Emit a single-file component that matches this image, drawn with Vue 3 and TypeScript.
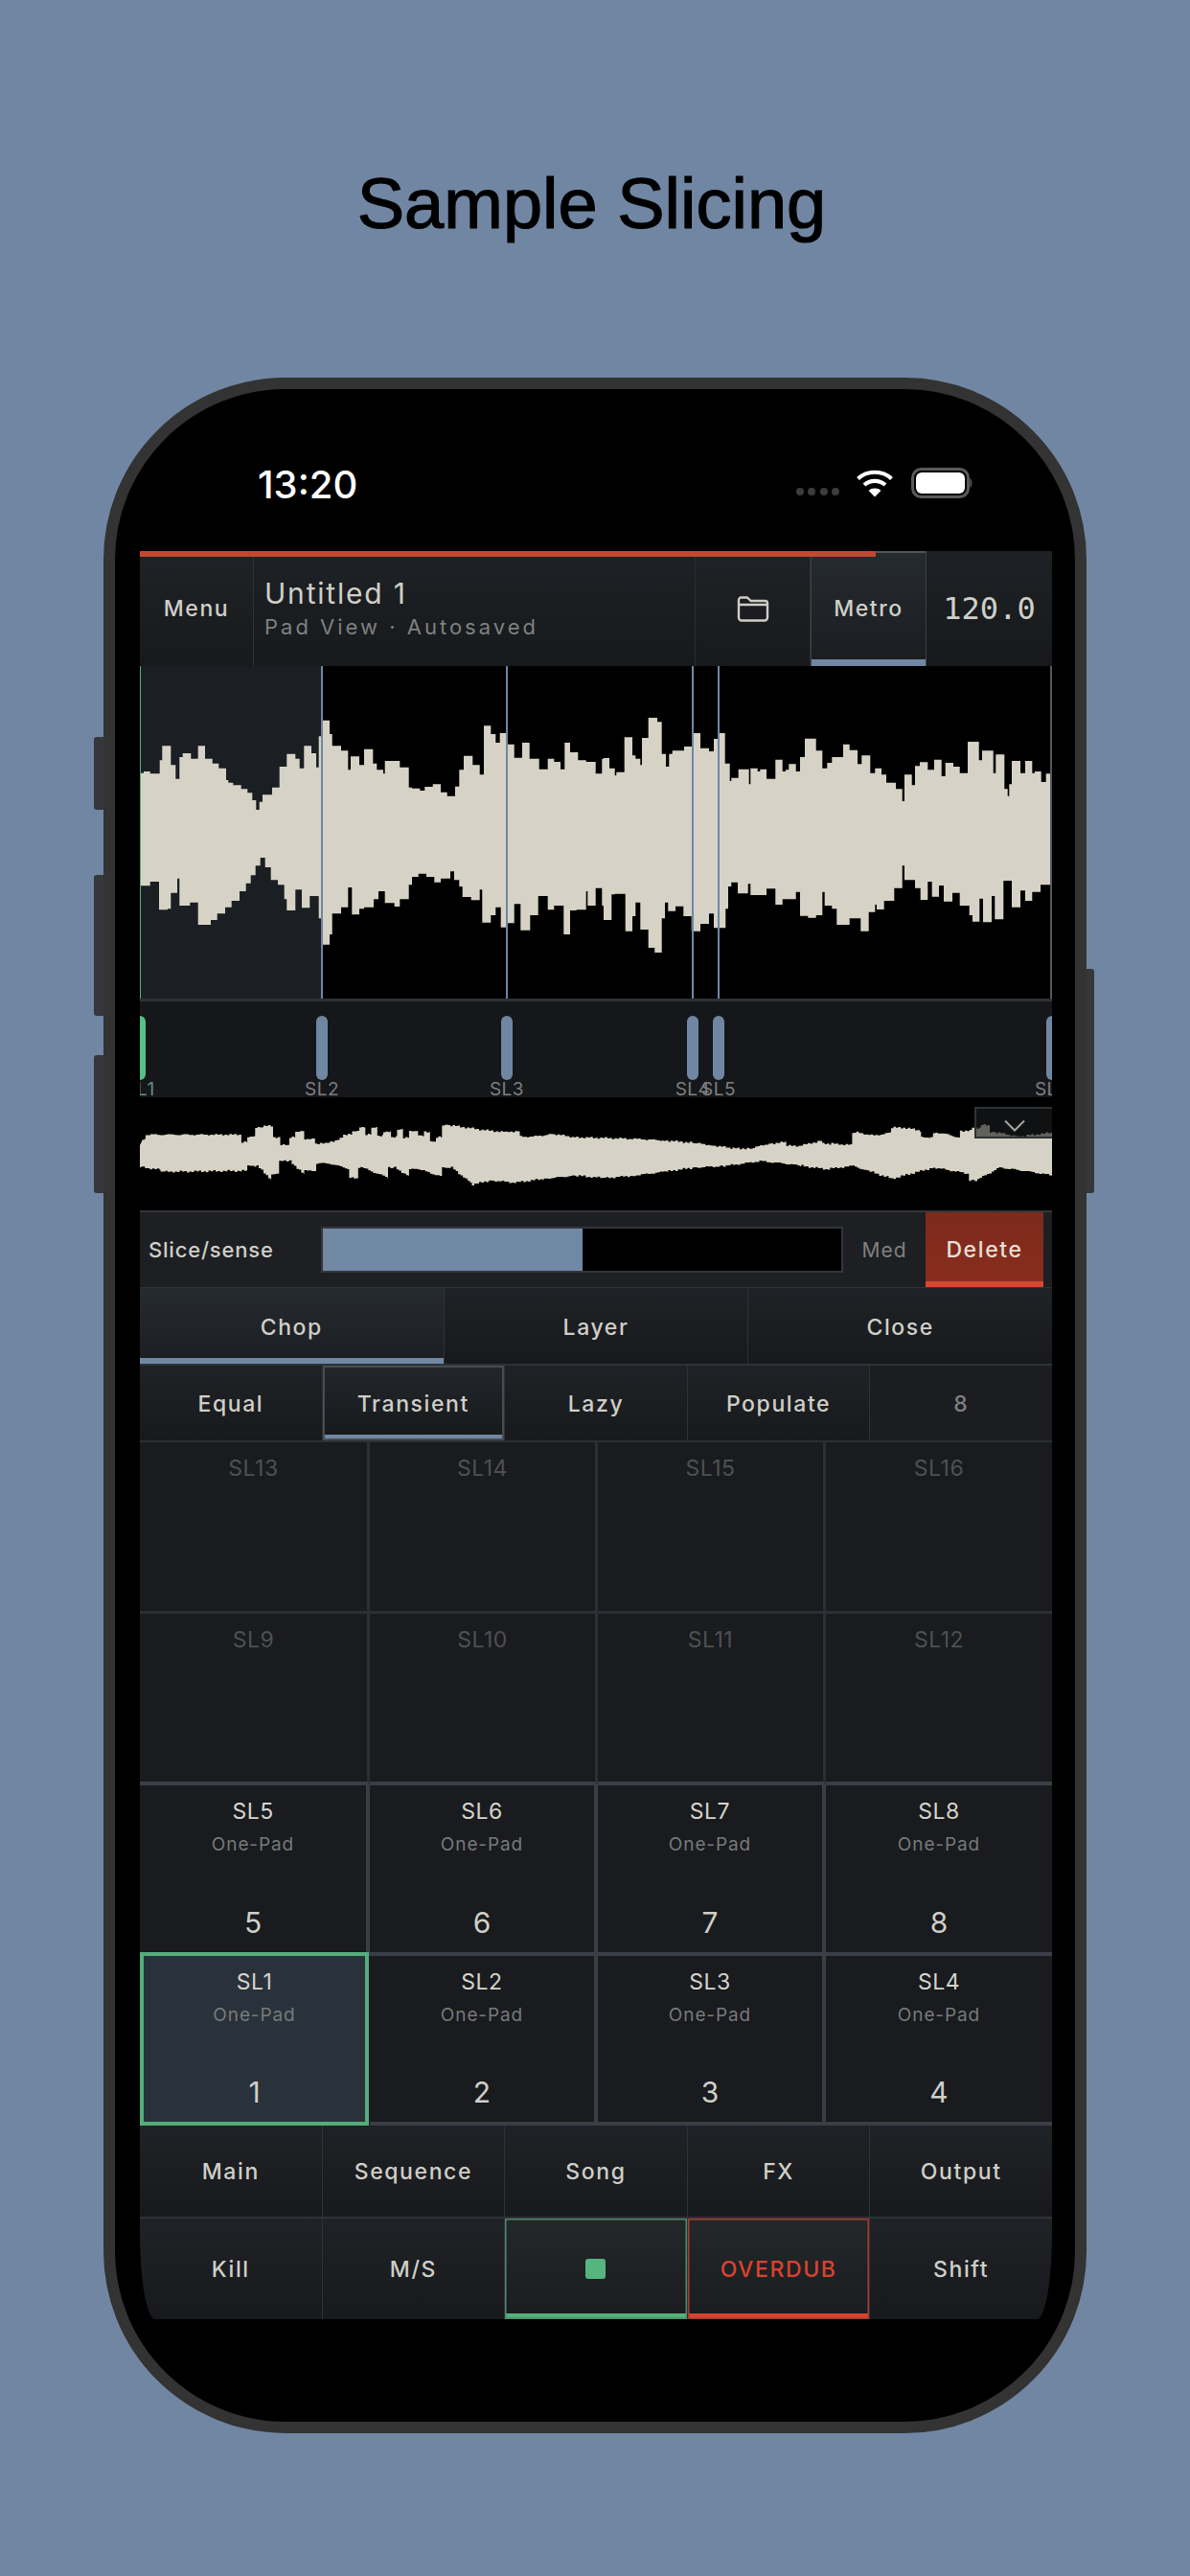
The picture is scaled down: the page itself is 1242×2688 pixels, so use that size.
<script setup lang="ts">
// envelope data is [endX, y] pairs read off the reference, in its own crop coordinates
const waveTopA = [60,350,80,345,110,352,118,310,145,265,160,325,172,368,182,300,208,288,230,305,252,265,275,305,295,320,318,335,325,372,340,380,365,388,385,400,400,412,412,435,422,465,432,440,462,418,485,395,508,330,535,290,548,305,562,335,585,265,600,288,608,332,620,235,642,185,650,228,678,265,700,280,708,340,735,298,750,325,778,275,790,320,810,340,815,352,862,312,890,332,900,395,925,398,940,405,965,393,990,385,1010,410,1035,422,1048,392,1062,340,1090,296,1112,325,1125,355,1147,202,1162,228,1175,255,1195,225,1220,260,1245,302,1268,255,1298,305,1325,338,1345,305,1365,315,1378,338,1395,255,1420,285,1445,310,1475,315,1495,352,1500,305]
const waveTopB = [48,303,65,335,70,358,95,347,120,238,130,295,145,305,150,325,170,240,198,177,212,190,225,290,235,330,245,290,282,280,310,267,333,225,360,272,375,282,388,243,410,225,425,320,430,375,452,365,485,338,490,385,512,335,520,345,540,338,568,368,590,308,600,345,610,340,632,322,645,345,660,300,695,242,715,280,730,335,745,318,780,300,800,260,825,278,838,322,865,295,880,350,900,335,915,355,945,380,965,400,972,438,995,355,1005,388,1020,328,1045,316,1065,340,1088,308,1100,360,1125,318,1145,330,1170,350,1205,252,1215,310,1250,280,1258,350,1285,292,1295,400,1300,422,1308,385,1335,312,1350,350,1372,312,1380,350,1400,345,1415,378,1435,352]
const waveBotA = [80,703,108,690,135,778,145,775,165,725,172,680,205,765,230,755,270,825,290,810,315,790,335,770,360,750,380,720,395,695,410,670,425,640,440,615,458,645,480,685,500,700,508,745,535,780,555,715,580,772,608,735,620,805,642,887,650,855,678,790,700,770,712,708,735,793,750,775,780,770,795,745,815,720,845,757,862,768,890,745,900,700,920,675,945,665,970,675,990,692,1020,680,1032,658,1048,685,1058,705,1085,738,1112,748,1120,715,1147,818,1162,795,1178,770,1195,833,1220,820,1240,760,1270,842,1295,795,1325,735,1345,778,1375,765,1395,855,1415,780,1445,778,1450,720,1475,765,1495,710,1500,765]
const waveBotB = [55,810,65,730,98,728,120,845,130,798,145,755,170,840,190,897,212,912,222,805,232,755,255,782,280,767,305,798,333,845,360,822,375,790,412,835,420,775,430,705,450,692,482,727,490,697,540,732,568,712,590,762,632,745,645,722,670,797,695,803,715,795,722,722,745,765,760,775,800,825,835,805,860,845,880,785,885,762,908,777,940,750,965,710,972,640,1005,685,1022,710,1045,747,1058,690,1080,737,1095,702,1122,752,1145,725,1175,765,1185,795,1207,815,1218,743,1245,817,1255,735,1282,808,1308,687,1335,770,1350,718,1372,750,1398,722,1435,700]
const miniTop = [30,490,35,475,55,462,195,462,205,485,218,468,232,440,248,435,260,470,275,495,285,470,300,452,318,475,335,490,365,470,380,462,392,450,402,440,412,462,422,440,432,465,445,452,455,470,465,445,475,470,490,450,500,465,510,455,520,485,530,470,540,432,600,448,640,455,660,452,680,468,715,460,750,470,850,475,900,480,950,488,980,495,1015,505,1045,505,1075,490,1105,485,1125,497,1165,480,1180,490,1215,495,1222,455,1250,465,1280,455,1300,440,1330,450,1350,470,1365,458,1395,472,1415,450,1430,440,1445,432,1455,455,1490,468,1550,455]
const miniBot = [30,565,60,572,80,578,205,575,220,560,245,605,258,585,275,545,300,590,320,575,340,552,375,570,390,598,395,565,440,598,450,565,475,595,490,570,530,595,545,565,580,618,610,605,650,612,700,600,750,590,800,598,850,590,900,578,950,565,1000,560,1060,545,1100,552,1130,560,1170,570,1215,560,1240,575,1280,600,1320,580,1350,565,1410,585,1420,605,1460,565,1500,575,1550,590]

function steps(data: number[], startX: number, x0: number, xs: number, y0: number, ys: number): string[] {
  const pts: string[] = []
  let x = startX
  for (let i = 0; i < data.length; i += 2) {
    const nx = x0 + data[i] / xs
    const y = y0 + data[i + 1] / ys
    pts.push(`${x.toFixed(1)},${y.toFixed(1)}`, `${nx.toFixed(1)},${y.toFixed(1)}`)
    x = nx
  }
  return pts
}

// the overview is drawn finer than the main view: short columns, slopes only over long runs
function rough(data: number[], x0: number, xs: number, y0: number, ys: number, dir: number): string[] {
  const pts: string[] = []
  let px = x0 + data[0] / xs
  let py = y0 + data[1] / ys
  for (let i = 2; i < data.length; i += 2) {
    const nx = x0 + data[i] / xs
    const ny = y0 + data[i + 1] / ys
    for (let x = px; x < nx; x += 2.5) {
      const t = nx - px < 14 ? 1 : (x - px) / (nx - px)
      const y = py + (ny - py) * t + dir * Math.sin(x * 1.7) * Math.sin(x * 0.43) * 1.1
      const xEnd = Math.min(x + 2.5, nx)
      pts.push(`${x.toFixed(1)},${y.toFixed(1)}`, `${xEnd.toFixed(1)},${y.toFixed(1)}`)
    }
    px = nx
    py = ny
  }
  return pts
}

const wavePoints = [
  ...steps(waveTopA, 146, 130, 3, 690, 3),
  ...steps(waveTopB, 630, 620, 3, 690, 3),
  ...[...steps(waveBotA, 146, 130, 3, 690, 3), ...steps(waveBotB, 630, 620, 3, 690, 3)].reverse(),
].join(' ')

const miniPoints = [
  '146,1195',
  ...rough(miniTop, 130, 1.6, 1030, 3, 1),
  ...rough(miniBot, 130, 1.6, 1030, 3, -1).reverse(),
  '146,1218',
].join(' ')

const slices = [
  { name: 'SL1', x: 0 },
  { name: 'SL2', x: 190 },
  { name: 'SL3', x: 383 },
  { name: 'SL4', x: 577 },
  { name: 'SL5', x: 604 },
  { name: 'SL6', x: 952 },
]

const modes = ['Chop', 'Layer', 'Close']
const subModes = ['Equal', 'Transient', 'Lazy', 'Populate', '8']

const pads = [13, 14, 15, 16, 9, 10, 11, 12, 5, 6, 7, 8, 1, 2, 3, 4].map((n) => ({
  n,
  used: n <= 8,
}))

const navRow = ['Main', 'Sequence', 'Song', 'FX', 'Output']
</script>

<template>
  <div class="page">
    <h1 class="title">Sample Slicing</h1>

    <div class="phone">
      <span class="side side-l1"></span>
      <span class="side side-l2"></span>
      <span class="side side-l3"></span>
      <span class="side side-r"></span>

      <div class="status">
        <span class="time">13:20</span>
        <div class="status-icons">
          <div class="signal"><i></i><i></i><i></i><i></i></div>
          <svg class="wifi" width="40" height="30" viewBox="0 0 40 30" fill="none" stroke="#fff" stroke-width="4.2">
            <path d="M2.5 10.5 C12 1.5 28 1.5 37.5 10.5" />
            <path d="M9 17 C15 11.5 25 11.5 31 17" />
            <path d="M20 29.5 L13.6 23 C17 19.8 23 19.8 26.4 23 Z" fill="#fff" stroke="none" />
          </svg>
          <svg class="battery" width="65" height="32" viewBox="0 0 65 32">
            <rect x="1.5" y="1.5" width="58" height="29" rx="9" fill="none" stroke="#5a5a5a" stroke-width="3" />
            <rect x="5" y="5" width="51" height="22" rx="6" fill="#fff" />
            <path d="M61.5 11 C64 12 64 20 61.5 21 Z" fill="#5a5a5a" />
          </svg>
        </div>
      </div>

      <div class="app">
        <header class="topbar">
          <div class="progress"></div>
          <div class="cell menu">Menu</div>
          <div class="doc">
            <div class="doc-name">Untitled 1</div>
            <div class="doc-sub">Pad View · Autosaved</div>
          </div>
          <div class="cell folder">
            <svg width="34" height="27" viewBox="0 0 34 27" fill="none" stroke="#cfcfc8" stroke-width="2.4" stroke-linejoin="round">
              <path d="M2 6 V4 a2.5 2.5 0 0 1 2.5-2.5 H11 l3.5 3.5 H29.5 a2.5 2.5 0 0 1 2.5 2.5 V22.5 a3 3 0 0 1-3 3 H5 a3 3 0 0 1-3-3 Z" />
              <path d="M2 9 H32" />
            </svg>
          </div>
          <div class="cell metro">Metro</div>
          <div class="bpm">120.0</div>
        </header>

        <div class="wave">
          <svg width="952" height="347" viewBox="146 695 952 347">
            <rect x="146" y="695" width="190" height="347" fill="#1b1f24" />
            <polygon :points="wavePoints" fill="#d6d3c6" />
            <rect x="145" y="695" width="2" height="347" fill="#56b07c" />
            <rect
              v-for="s in slices.slice(1, 5)"
              :key="s.name"
              :x="145 + s.x"
              y="695"
              width="2"
              height="347"
              fill="#6f87a3"
            />
            <rect x="1096" y="695" width="2" height="347" fill="#55585c" />
          </svg>
        </div>

        <div class="ruler">
          <div
            v-for="(s, i) in slices"
            :key="s.name"
            class="marker"
            :style="{ left: s.x + 'px' }"
          >
            <span class="handle" :class="{ first: i === 0 }"></span>
            <span class="handle-label" :class="{ first: i === 0 }">{{ s.name }}</span>
          </div>
        </div>

        <div class="overview">
          <svg width="952" height="118" viewBox="146 1145 952 118">
            <polygon :points="miniPoints" fill="#d6d3c6" />
          </svg>
          <div class="collapse">
            <svg width="24" height="13" viewBox="0 0 24 13" fill="none" stroke="#a5a5a5" stroke-width="2">
              <path d="M2 1.5 L12 11.5 L22 1.5" />
            </svg>
          </div>
        </div>

        <div class="sense">
          <span class="sense-label">Slice/sense</span>
          <div class="slider"><div class="slider-fill" :style="{ width: '50%' }"></div></div>
          <span class="sense-value">Med</span>
          <div class="delete">Delete</div>
        </div>

        <div class="row modes">
          <div v-for="(m, i) in modes" :key="m" class="cell" :class="{ on: i === 0 }">{{ m }}</div>
        </div>

        <div class="row subs">
          <div
            v-for="(m, i) in subModes"
            :key="m"
            class="cell"
            :class="{ picked: i === 1, plain: i === 4 }"
          >{{ m }}</div>
        </div>

        <div class="pads">
          <div
            v-for="p in pads"
            :key="p.n"
            class="pad"
            :class="{ used: p.used, active: p.n === 1 }"
          >
            <span class="pad-name">SL{{ p.n }}</span>
            <template v-if="p.used">
              <span class="pad-type">One-Pad</span>
              <span class="pad-num">{{ p.n }}</span>
            </template>
          </div>
        </div>

        <div class="row nav">
          <div v-for="b in navRow" :key="b" class="cell">{{ b }}</div>
        </div>

        <div class="row transport">
          <div class="cell">Kill</div>
          <div class="cell">M/S</div>
          <div class="cell stop"><span class="stop-icon"></span></div>
          <div class="cell overdub">OVERDUB</div>
          <div class="cell">Shift</div>
        </div>
      </div>
    </div>
  </div>
</template>

<style>
html,
body {
  margin: 0;
  background: #7086a2;
}
</style>

<style scoped>
.page {
  width: 1242px;
  height: 2688px;
  overflow: hidden;
  background: #7086a2;
}
.title {
  margin: 0;
  height: 394px;
  box-sizing: border-box;
  padding: 171px 7px 0 0;
  text-align: center;
  font: 400 74px/84px "Liberation Sans", Arial, sans-serif;
  -webkit-text-stroke: 1.2px #000;
  color: #000;
}
.phone {
  position: relative;
  box-sizing: border-box;
  width: 1026px;
  height: 2145px;
  margin-left: 108px;
  border: 12px solid #333333;
  border-radius: 190px;
  background: #000;
  font-family: Inter, "Liberation Sans", sans-serif;
  color: #cfcfc8;
  display: flex;
  flex-direction: column;
}
.side {
  position: absolute;
  width: 10px;
  background: #35373a;
}
.side-l1 { left: -22px; top: 363px; height: 76px; border-radius: 3px 0 0 3px; }
.side-l2 { left: -22px; top: 507px; height: 147px; border-radius: 3px 0 0 3px; }
.side-l3 { left: -22px; top: 695px; height: 144px; border-radius: 3px 0 0 3px; }
.side-r { right: -20px; width: 8px; top: 605px; height: 234px; border-radius: 0 3px 3px 0; }

.status {
  height: 169px;
  box-sizing: border-box;
  padding: 76px 106px 0 149px;
  display: flex;
  justify-content: space-between;
  align-items: flex-start;
}
.time {
  font-size: 40px;
  line-height: 48px;
  font-weight: 500;
  color: #fff;
}
.status-icons {
  display: flex;
  align-items: flex-start;
  margin-top: 6px;
}
.signal {
  display: flex;
  gap: 4.5px;
  margin: 21px 17px 0 0;
}
.signal i {
  width: 8px;
  height: 8px;
  border-radius: 50%;
  background: #3c3c3c;
}
.wifi {
  display: block;
  margin: 1px 18px 0 0;
}
.battery {
  display: block;
}

.app {
  margin: 0 24px 0 26px;
  height: 1845px;
  display: flex;
  flex-direction: column;
  overflow: hidden;
  border-radius: 0 0 16px 16px / 0 0 90px 90px;
}
.cell {
  display: flex;
  align-items: center;
  justify-content: center;
  box-sizing: border-box;
  font-size: 23px;
  font-weight: 500;
  letter-spacing: 1.6px;
  color: #cfcfc8;
  background: linear-gradient(#1f2226, #18191c);
  border-right: 1px solid #2f3236;
}
.topbar {
  position: relative;
  height: 120px;
  display: flex;
  background: linear-gradient(#1e2125, #17191c);
}
.progress {
  position: absolute;
  left: 0;
  top: 0;
  width: 768px;
  height: 6px;
  background: #c4472f;
  z-index: 1;
}
.menu {
  width: 119px;
}
.doc {
  flex: 1;
  box-sizing: border-box;
  padding: 24px 0 0 11px;
  border-right: 1px solid #2a2d31;
}
.doc-name {
  font-size: 30px;
  line-height: 40px;
  letter-spacing: 1.8px;
}
.doc-sub {
  margin-top: 2px;
  font-size: 22px;
  line-height: 26px;
  letter-spacing: 3px;
  color: #7f817f;
}
.folder {
  width: 120px;
}
.metro {
  width: 121px;
  background: linear-gradient(#262b30, #1a1c20);
  border-left: 1px solid #3c4045;
  border-right: 1px solid #3c4045;
  box-shadow: inset 0 2px 0 #50555a, inset 0 -7px 0 #7088a4;
}
.bpm {
  width: 131px;
  display: flex;
  align-items: center;
  justify-content: center;
  font-family: "DejaVu Sans Mono", "Liberation Mono", monospace;
  font-size: 32px;
}

.wave {
  height: 347px;
  background: #000;
  border-bottom: 3px solid #2f3136;
}
.wave svg,
.overview > svg {
  display: block;
}

.ruler {
  position: relative;
  height: 100px;
  overflow: hidden;
  background: #15171b;
}
.marker {
  position: absolute;
  top: 0;
  width: 0;
}
.handle {
  position: absolute;
  left: -6px;
  top: 15px;
  width: 12px;
  height: 67px;
  border-radius: 6px;
  background: #6f87a3;
}
.handle.first {
  background: #56c184;
}
.handle-label {
  position: absolute;
  left: -30px;
  width: 60px;
  top: 81px;
  text-align: center;
  font-size: 19px;
  line-height: 22px;
  letter-spacing: 0.5px;
  color: #7d7f80;
}
.handle-label.first {
  color: #5d9078;
}

.overview {
  position: relative;
  height: 118px;
  background: #000;
}
.collapse {
  position: absolute;
  right: 0;
  top: 10px;
  box-sizing: border-box;
  width: 81px;
  height: 33px;
  display: flex;
  justify-content: center;
  padding-top: 11px;
  background: rgba(26, 27, 30, 0.62);
  border: 2px solid #2f3135;
  border-right: 0;
}

.sense {
  height: 80px;
  box-sizing: border-box;
  padding: 0 9px;
  display: flex;
  align-items: center;
  background: #1d1f22;
  border-top: 2px solid #33353a;
}
.sense-label {
  width: 180px;
  font-size: 22px;
  font-weight: 500;
  letter-spacing: 0.8px;
  color: #cfcfc8;
}
.slider {
  width: 545px;
  height: 48px;
  box-sizing: border-box;
  background: #000;
  border: 2px solid #34363b;
}
.slider-fill {
  height: 100%;
  background: #7088a4;
}
.sense-value {
  width: 86px;
  text-align: center;
  font-size: 21px;
  letter-spacing: 1px;
  color: #7f817f;
}
.delete {
  width: 123px;
  align-self: stretch;
  box-sizing: border-box;
  display: flex;
  align-items: center;
  justify-content: center;
  font-size: 23px;
  font-weight: 500;
  letter-spacing: 1.6px;
  color: #e6e0d8;
  background: linear-gradient(#7c2a1c, #8a2d1d);
  box-shadow: inset 0 -6px 0 #d9472f;
}

.row {
  display: flex;
  height: 80px;
}
.row .cell {
  flex: 1 1 0;
}
.row .cell:last-child {
  border-right: 0;
}
.modes {
  border-top: 1px solid #2f3236;
  box-sizing: border-box;
}
.modes .cell,
.subs .cell {
  padding-top: 2px;
}
.modes .on {
  background: linear-gradient(#262b2f, #1b1d21);
  box-shadow: inset 0 -6px 0 #7088a4;
}
.subs {
  box-sizing: border-box;
  border-top: 2px solid #2f3236;
}
.subs .picked {
  background: linear-gradient(#23272b, #16181b);
  box-shadow: inset 0 0 0 2px #474c52, inset 0 -6px 0 #7088a4;
}
.subs .plain {
  color: #7f817f;
  background: #1b1d20;
}

.pads {
  height: 715px;
  box-sizing: border-box;
  display: grid;
  grid-template-columns: 240px 238px 238px 236px;
  grid-template-rows: 179px 179px 178px 177px;
  border-top: 2px solid #2c2f33;
  background: #18191c;
}
.pad {
  box-sizing: border-box;
  display: flex;
  flex-direction: column;
  align-items: center;
  border-right: 3px solid #2c2f33;
  border-bottom: 3px solid #2c2f33;
  background: #191b1e;
  padding: 12px 0 0;
}
.pad:nth-child(4n) {
  border-right: 0;
}
.pad.used {
  border-right: 4px solid #3a3e46;
  border-bottom: 4px solid #3a3e46;
}
.pad.used:nth-child(4n) {
  border-right: 0;
}
.pads .pad:nth-child(n + 5):nth-child(-n + 8) {
  border-bottom: 4px solid #3a3e46;
}
.pad-name {
  font-size: 23px;
  line-height: 30px;
  letter-spacing: 0.5px;
  color: #4e5052;
}
.pad.used .pad-name {
  color: #d4d4cd;
}
.pad-type {
  margin-top: 5px;
  font-size: 19px;
  line-height: 30px;
  letter-spacing: 0.9px;
  color: #77797a;
}
.pad-num {
  margin-top: auto;
  margin-bottom: 13px;
  font-size: 30px;
  line-height: 36px;
  color: #cfcfc8;
}
.pad.active {
  margin-top: -4px;
  margin-right: 1px;
  background: #29323a;
  border: 4px solid #54ad7b;
}

.nav {
  height: 95px;
}
.transport {
  height: 107px;
  box-sizing: border-box;
  border-top: 2px solid #2f3236;
}
.stop,
.overdub {
  background: linear-gradient(#24282a, #1a1c1f);
}
.stop {
  box-shadow: inset 0 0 0 1.5px #4d8a6a, inset 0 -6px 0 #56b07c;
}
.stop-icon {
  width: 21px;
  height: 21px;
  border-radius: 3px;
  background: #56b57f;
}
.overdub {
  color: #d8432f;
  box-shadow: inset 0 0 0 1.5px #a83c2c, inset 0 -6px 0 #d8432f;
}
</style>
